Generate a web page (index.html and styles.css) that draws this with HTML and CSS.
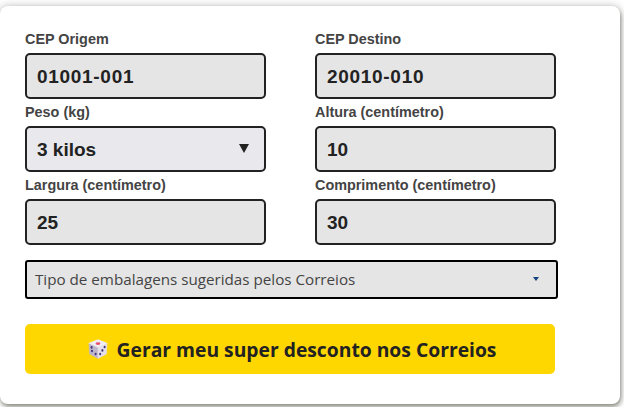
FILE: index.html
```html
<!DOCTYPE html>
<html lang="pt-BR">
<head>
<meta charset="UTF-8" />
<meta name="viewport" content="width=device-width, initial-scale=1" />
<title>Gerar desconto nos Correios</title>
<link rel="stylesheet" href="styles.css">
</head>
<body>

<form class="card">
  <div class="fields">
    <div class="field">
      <label>CEP Origem</label>
      <div class="box box-cep">01001-001</div>
    </div>
    <div class="field">
      <label>CEP Destino</label>
      <div class="box box-cep">20010-010</div>
    </div>
    <div class="field">
      <label>Peso (kg)</label>
      <div class="box box-select">3 kilos <span class="arrow"></span></div>
    </div>
    <div class="field">
      <label>Altura (centímetro)</label>
      <div class="box">10</div>
    </div>
    <div class="field">
      <label>Largura (centímetro)</label>
      <div class="box">25</div>
    </div>
    <div class="field">
      <label>Comprimento (centímetro)</label>
      <div class="box">30</div>
    </div>
  </div>

  <div class="package">
    Tipo de embalagens sugeridas pelos Correios
    <span class="caret"></span>
  </div>

  <button class="submit" type="button">
    <svg class="dice" width="20" height="20" viewBox="0 0 20 20">
      <polygon points="10,0.8 19.2,4.5 10,9 0.8,4.5" fill="#f1edf4" stroke="#f1edf4" stroke-linejoin="round"/>
      <polygon points="1,4.8 10,9 10,19.4 1.6,15" fill="#bdb5cb" stroke="#bdb5cb" stroke-width="0.6" stroke-linejoin="round"/>
      <polygon points="19,4.8 10,9 10,19.4 18.4,15" fill="#e4deea" stroke="#e4deea" stroke-width="0.6" stroke-linejoin="round"/>
      <ellipse cx="10" cy="4.6" rx="2.4" ry="1.3" fill="#e8506e"/>
      <ellipse cx="3.6" cy="8.4" rx="1" ry="1.3" fill="#45357a"/>
      <ellipse cx="7.6" cy="15" rx="1" ry="1.3" fill="#45357a"/>
      <ellipse cx="4" cy="12" rx="1" ry="1.3" fill="#45357a"/>
      <ellipse cx="16.6" cy="8" rx="1" ry="1.3" fill="#45357a"/>
      <ellipse cx="14.4" cy="11.4" rx="1" ry="1.3" fill="#45357a"/>
      <ellipse cx="12.2" cy="15" rx="1" ry="1.3" fill="#45357a"/>
    </svg>
    Gerar meu super desconto nos Correios
  </button>
</form>

</body>
</html>
```

FILE: styles.css
```css
html, body {
  height: 100%;
}
body {
  margin: 0;
  padding-top: 6px;
  box-sizing: border-box;
  background: #fff;
  font-family: "Liberation Sans", Arial, sans-serif;
  overflow: hidden;
}
.card {
  width: 620px;
  height: 398px;
  box-sizing: border-box;
  padding: 24px 25px 0;
  background: #fff;
  border-radius: 8px;
  box-shadow: 0 0 8px rgba(0, 0, 0, 0.25), 1px 3px 4px rgba(60, 60, 40, 0.45);
}
.fields {
  display: grid;
  grid-template-columns: 241px 241px;
  column-gap: 49px;
  row-gap: 0;
}
.field {
  height: 73px;
}
.field label {
  display: block;
  height: 23px;
  line-height: 18px;
  font-size: 14.4px;
  font-weight: bold;
  color: #444;
}
.box {
  position: relative;
  height: 46px;
  box-sizing: border-box;
  padding: 0 10px;
  background: #e5e5e5;
  border: 2px solid #222;
  border-radius: 5px;
  line-height: 44px;
  font-size: 19px;
  font-weight: bold;
  color: #222;
}
.box-cep {
  letter-spacing: 0.7px;
}
.box-select {
  background: #e9e9ed;
}
.arrow {
  position: absolute;
  right: 15px;
  top: 16px;
  border-left: 5px solid transparent;
  border-right: 5px solid transparent;
  border-top: 9px solid #222;
}
.package {
  position: relative;
  width: 533px;
  height: 39px;
  margin-top: 11px;
  box-sizing: border-box;
  padding-left: 8px;
  background: #e5e5e5;
  border: 2px solid #000;
  border-radius: 3px;
  line-height: 35px;
  font-family: "Open Sans", sans-serif;
  font-size: 15.2px;
  color: #444;
}
.caret {
  position: absolute;
  right: 17px;
  top: 15px;
  border-left: 3px solid transparent;
  border-right: 3px solid transparent;
  border-top: 4px solid #14457f;
}
.submit {
  display: flex;
  align-items: center;
  justify-content: center;
  gap: 9px;
  width: 530px;
  height: 50px;
  margin-top: 25px;
  padding: 0 0 0 4px;
  background: #ffd700;
  border: 0;
  border-radius: 5px;
  font-family: "Open Sans", sans-serif;
  font-size: 19.3px;
  font-weight: bold;
  color: #222;
}
.dice {
  flex: none;
}
```
